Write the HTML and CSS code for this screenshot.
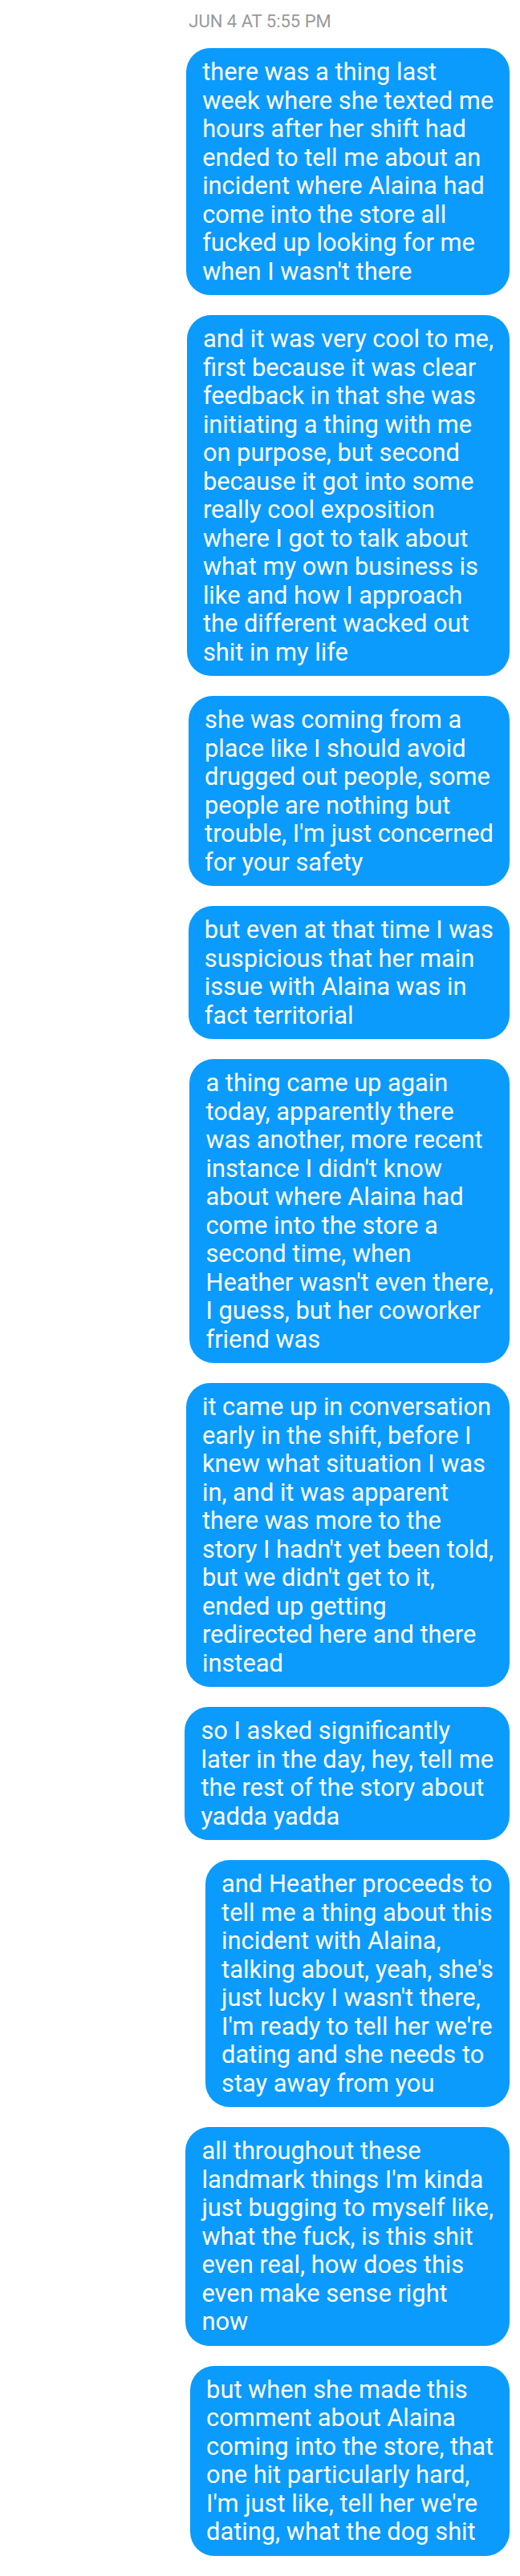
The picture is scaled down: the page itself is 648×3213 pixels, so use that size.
FILE: index.html
```html
<!DOCTYPE html>
<html>
<head>
<meta charset="utf-8">
<link rel="stylesheet" href="styles.css">
</head>
<body>
<div class="thread">
  <div class="stamp">JUN 4 AT 5:55 PM</div>
  <div class="msgs">
    <div class="bubble">there was a thing last<br>week where she texted me<br>hours after her shift had<br>ended to tell me about an<br>incident where Alaina had<br>come into the store all<br>fucked up looking for me<br>when I wasn't there</div>
    <div class="bubble">and it was very cool to me,<br>first because it was clear<br>feedback in that she was<br>initiating a thing with me<br>on purpose, but second<br>because it got into some<br>really cool exposition<br>where I got to talk about<br>what my own business is<br>like and how I approach<br>the different wacked out<br>shit in my life</div>
    <div class="bubble">she was coming from a<br>place like I should avoid<br>drugged out people, some<br>people are nothing but<br>trouble, I'm just concerned<br>for your safety</div>
    <div class="bubble">but even at that time I was<br>suspicious that her main<br>issue with Alaina was in<br>fact territorial</div>
    <div class="bubble">a thing came up again<br>today, apparently there<br>was another, more recent<br>instance I didn't know<br>about where Alaina had<br>come into the store a<br>second time, when<br>Heather wasn't even there,<br>I guess, but her coworker<br>friend was</div>
    <div class="bubble">it came up in conversation<br>early in the shift, before I<br>knew what situation I was<br>in, and it was apparent<br>there was more to the<br>story I hadn't yet been told,<br>but we didn't get to it,<br>ended up getting<br>redirected here and there<br>instead</div>
    <div class="bubble">so I asked significantly<br>later in the day, hey, tell me<br>the rest of the story about<br>yadda yadda</div>
    <div class="bubble">and Heather proceeds to<br>tell me a thing about this<br>incident with Alaina,<br>talking about, yeah, she's<br>just lucky I wasn't there,<br>I'm ready to tell her we're<br>dating and she needs to<br>stay away from you</div>
    <div class="bubble">all throughout these<br>landmark things I'm kinda<br>just bugging to myself like,<br>what the fuck, is this shit<br>even real, how does this<br>even make sense right<br>now</div>
    <div class="bubble">but when she made this<br>comment about Alaina<br>coming into the store, that<br>one hit particularly hard,<br>I'm just like, tell her we're<br>dating, what the dog shit</div>
  </div>
</div>
</body>
</html>
```

FILE: styles.css
```css
html, body {
  margin: 0;
  padding: 0;
  background: #ffffff;
}

.thread {
  display: flex;
  flex-direction: column;
  font-family: Roboto, "Liberation Sans", sans-serif;
}

.stamp {
  margin-top: 14px;
  text-align: center;
  font-size: 22px;
  line-height: 26px;
  color: #9a9a9a;
}

.msgs {
  display: flex;
  flex-direction: column;
  align-items: flex-end;
  gap: 25px;
  margin-top: 20px;
  padding-right: 13px;
}

.bubble {
  background: #0a9bfd;
  color: #ffffff;
  font-size: 30.8px;
  line-height: 35.5px;
  padding: 12px 20px;
  border-radius: 30px;
  white-space: nowrap;
}
```
